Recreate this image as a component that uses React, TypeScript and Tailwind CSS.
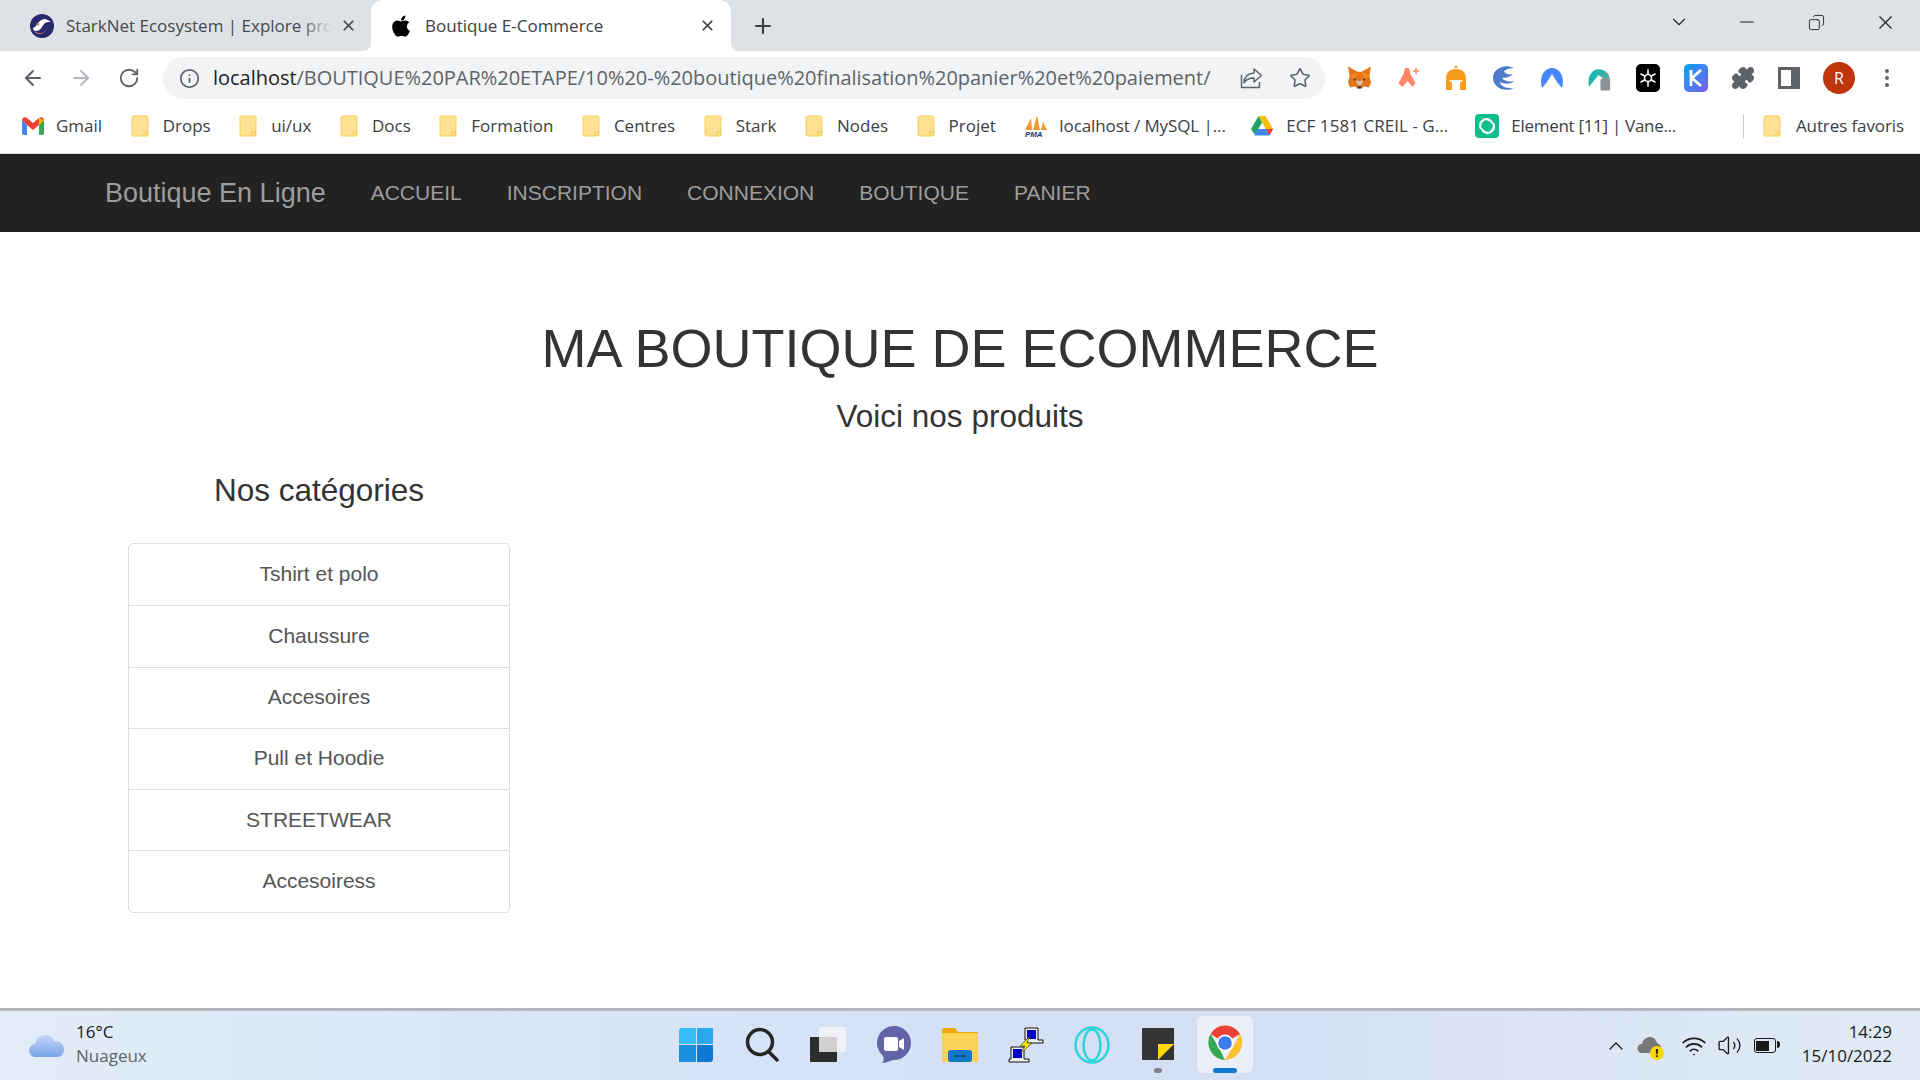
import { ArrowLeft, ArrowRight, RotateCw, Info, Star, Plus, X, ChevronDown, Minus, Copy, Puzzle, EllipsisVertical, ChevronUp, Wifi, Volume2 } from 'lucide-react'
import { FaApple } from 'react-icons/fa'

const uiFont = "font-['Open_Sans',sans-serif]"

function Folder() {
  return (
    <svg width="18" height="22" viewBox="0 0 18 22" aria-hidden="true">
      <path d="M1 2.500A1.500 1.500 0 0 1 2.500 1h13A1.500 1.500 0 0 1 17 2.500v17a1.500 1.500 0 0 1-1.500 1.500h-13A1.500 1.500 0 0 1 1 19.500z" fill="#fde293" stroke="#f6cf5c" />
      <path d="M13 21v-4h3.500v4" fill="none" stroke="#f2c94c" />
    </svg>
  )
}

function Gmail() {
  return (
    <svg width="22" height="18" viewBox="0 0 22 18" aria-hidden="true">
      <path d="M0 3v13a2 2 0 0 0 2 2h3V8z" fill="#4285f4" />
      <path d="M22 3v13a2 2 0 0 1-2 2h-3V8z" fill="#34a853" />
      <path d="M0 3c0-2.500 3-3.700 5-2l6 5 6-5c2-1.700 5-.5 5 2L17 8l-6 5-6-5z" fill="#ea4335" />
      <path d="M17 1l5 2-5 5z" fill="#fbbc04" />
    </svg>
  )
}

function Pma() {
  return (
    <svg width="24" height="24" viewBox="0 0 24 24" aria-hidden="true">
      <path d="M1 16 7 4l1 12zM9 16l4-15 3 15zM17 16l2-8 4 8z" fill="#f39a2d" />
      <text x="1" y="23" fontSize="8" fontWeight="700" fontStyle="italic" fill="#24356f" fontFamily="Liberation Sans">PMA</text>
    </svg>
  )
}

function Drive() {
  return (
    <svg width="22" height="20" viewBox="0 0 22 20" aria-hidden="true">
      <path d="M7.500 0h7L22 13h-7z" fill="#fbbc04" />
      <path d="M7.500 0 11 6.500 4 19 0 13z" fill="#1ea362" />
      <path d="M7 13h15l-3.500 6.500H3.500z" fill="#4285f4" />
      <path d="M18.500 19.500 15 13h7z" fill="#ea4335" />
    </svg>
  )
}

function ElementLogo() {
  return (
    <svg width="24" height="24" viewBox="0 0 24 24" aria-hidden="true">
      <rect width="24" height="24" rx="4" fill="#0dbd8b" />
      <path d="M9 5.500a7 7 0 0 1 8 3M18.500 10a7 7 0 0 1-3 8M15 18.500a7 7 0 0 1-8-3M5.500 14a7 7 0 0 1 3-8" fill="none" stroke="#fff" strokeWidth="2.200" strokeLinecap="round" />
    </svg>
  )
}

function Fox() {
  return (
    <svg width="26" height="26" viewBox="0 0 24 24" aria-hidden="true">
      <path d="M1 1l9 5h4l9-5-1.500 9 1.500 6-2 5-5-1-1.500 2h-5L8 20l-5 1-2-5 1.500-6z" fill="#e2761b" />
      <path d="M2.500 10 10 6 8 14zM21.500 10 14 6l2 8z" fill="#f6851b" />
      <path d="M8 14l2.500 5h3L16 14l-4 1z" fill="#d7c1b3" />
      <path d="M10 20h4l-1 2h-2z" fill="#233447" />
      <path d="M6 13l2.500-.5L8 15zM18 13l-2.500-.5.500 2.500z" fill="#233447" />
    </svg>
  )
}

const bookmarks = [
  { label: 'Gmail', icon: <Gmail />, cls: 'gap-3 mr-[28.5px]' },
  { label: 'Drops' },
  { label: 'ui/ux' },
  { label: 'Docs' },
  { label: 'Formation' },
  { label: 'Centres' },
  { label: 'Stark' },
  { label: 'Nodes' },
  { label: 'Projet' },
  { label: 'localhost / MySQL |...', icon: <Pma />, cls: 'gap-[11px] mr-[25.5px] tracking-[-0.1px]' },
  { label: 'ECF 1581 CREIL - G...', icon: <Drive />, cls: 'gap-[13px] mr-[27px] tracking-[0.05px]' },
  { label: 'Element [11] | Vane...', icon: <ElementLogo />, cls: 'gap-[12px] tracking-[-0.3px]' },
]

const extensions = [
  <Fox key="fox" />,
  <svg key="a" width="24" height="24" viewBox="0 0 24 24"><path d="M9 2h4l1.500 6 5 9-3 4-5-6-5 6-4-4 5-9z" fill="#ff8a65" /><path d="M20 2v6M17 5h6" stroke="#ff8a65" strokeWidth="1.500" /></svg>,
  <svg key="h" width="22" height="26" viewBox="0 0 22 26"><path d="M11 0l2 3H9zM1 14C1 7 5 4 11 4s10 3 10 10v11h-6v-7l3-3H4l3 3v7H1z" fill="#f89c1c" /></svg>,
  <svg key="c" width="24" height="26" viewBox="0 0 24 26"><path d="M22 3C12-2 1 4 1 13s11 15 21 10c-7 1-14-2-14-6 4 2 10 3 14-1-5 1-10 0-12-3 3 0 8-1 11-4-4 1-8 0-9-3 3-2 6-3 9-3z" fill="#4a7cc9" /></svg>,
  <svg key="n" width="24" height="22" viewBox="0 0 24 22"><path d="M2 21C-1 12 3 1 12 1s13 11 10 20l-5-6-5-8-5 8z" fill="#4687ff" /></svg>,
  <svg key="v" width="26" height="26" viewBox="0 0 26 26"><path d="M2 22C0 12 5 4 12 4s10 4 12 10l-8-1-4-3-5 6z" fill="#1eb7ad" /><rect x="14" y="14" width="10" height="12" rx="1" fill="#8a9297" /><circle cx="19" cy="11" r="3" fill="none" stroke="#8a9297" strokeWidth="1.500" /></svg>,
  <svg key="s" width="24" height="28" viewBox="0 0 24 28"><rect width="24" height="28" rx="5" fill="#000" /><g stroke="#fff" strokeWidth="1.600" strokeLinecap="round"><path d="M12 6v16M5 10l14 8M19 10 5 18" /></g><circle cx="12" cy="14" r="3.500" fill="#000" stroke="#fff" strokeWidth="1.500" /></svg>,
  <svg key="k" width="24" height="28" viewBox="0 0 24 28"><defs><linearGradient id="kg" x1="0" y1="0" x2="1" y2="1"><stop offset="0" stopColor="#08a5ef" /><stop offset="1" stopColor="#7c5cf0" /></linearGradient></defs><rect width="24" height="28" rx="5" fill="url(#kg)" /><path d="M7 6v16M17 6l-9 8 9 8" fill="none" stroke="#fff" strokeWidth="2.800" /></svg>,
]

const categories = ['Tshirt et polo', 'Chaussure', 'Accesoires', 'Pull et Hoodie', 'STREETWEAR', 'Accesoiress']
const navLinks = ['ACCUEIL', 'INSCRIPTION', 'CONNEXION', 'BOUTIQUE', 'PANIER']

function BrowserChrome() {
  return (
    <div className={uiFont}>
      {/* Tab strip */}
      <div className="h-[51px] bg-[#dee1e6] flex items-end">
        <div className="w-[371px] h-[51px] flex items-center pl-[30px] pr-[14px]">
          <svg width="24" height="24" viewBox="0 0 24 24" className="shrink-0" aria-hidden="true">
            <circle cx="12" cy="12" r="12" fill="#29296e" />
            <path d="M3 14c4-1 5-8 11-9 3 0 5 2 7 3-3 0-5 0-7 2s-3 7-8 7c-2 0-3-1-3-3z" fill="#fff" />
            <path d="M4 17c4 3 10 3 13-2-2 5-10 7-13 2z" fill="#ec796b" />
            <circle cx="8" cy="10" r="1.500" fill="#ec796b" />
          </svg>
          <div className="relative ml-3 w-[266px] overflow-hidden whitespace-nowrap text-[17px] text-[#45494e]">
            StarkNet Ecosystem | Explore pro
            <span className="absolute inset-y-0 right-0 w-8 bg-gradient-to-r from-transparent to-[#dee1e6]" />
          </div>
          <X size={17} strokeWidth={2.4} className="ml-auto text-[#45494e]" />
        </div>
        <div className="relative w-[360px] h-[51px] bg-white rounded-t-[12px] flex items-center pl-[18px] pr-[15px]">
          <span className="absolute bottom-0 -left-2 w-2 h-2 bg-[radial-gradient(circle_at_0_0,transparent_8px,#fff_8.5px)]" />
          <span className="absolute bottom-0 -right-2 w-2 h-2 bg-[radial-gradient(circle_at_100%_0,transparent_8px,#fff_8.5px)]" />
          <FaApple size={24} className="text-black shrink-0" />
          <span className="ml-3 text-[17px] text-[#3c4043] whitespace-nowrap">Boutique E-Commerce</span>
          <X size={17} strokeWidth={2.4} className="ml-auto text-[#3c4043]" />
        </div>
        <div className="h-[51px] flex items-center ml-[20px]">
          <Plus size={24} strokeWidth={2.2} className="text-[#3c4043]" />
        </div>
        <div className="ml-auto h-[44px] self-start flex items-center text-[#222]">
          <ChevronDown size={22} strokeWidth={1.2} className="mr-[46px]" />
          <Minus size={22} strokeWidth={1.2} className="mr-[50px]" />
          <Copy size={17} strokeWidth={1.3} className="mr-[49px] -scale-x-100" />
          <X size={23} strokeWidth={1.2} className="mr-[23px]" />
        </div>
      </div>

      {/* Toolbar */}
      <div className="h-[54px] bg-white flex items-center pl-[21px] pr-[21px]">
        <ArrowLeft size={24} className="text-[#5f6368] shrink-0" />
        <ArrowRight size={24} className="text-[#b4b7bb] shrink-0 ml-6" />
        <RotateCw size={22} className="text-[#5f6368] shrink-0 ml-[25px]" />
        <div className="ml-[23px] w-[1162px] h-[42px] rounded-full bg-[#f1f3f4] flex items-center pl-4 pr-[14px] shrink-0">
          <Info size={21} className="text-[#5f6368] shrink-0" />
          <span className="ml-[13px] text-[20px] tracking-[-0.03px] whitespace-nowrap text-[#5f6368]"><span className="text-[#202124]">localhost</span>/BOUTIQUE%20PAR%20ETAPE/10%20-%20boutique%20finalisation%20panier%20et%20paiement/</span>
          <svg width="24" height="24" viewBox="0 0 24 24" fill="none" stroke="#5f6368" strokeWidth="1.500" strokeLinejoin="round" className="ml-auto shrink-0" aria-hidden="true">
            <path d="M2.500 9v12.500h18V16" />
            <path d="M15 3l7.500 6.500L15 16v-4c-5 0-8 1.500-10 5 0-6 4-9.500 10-10z" />
          </svg>
          <Star size={22} strokeWidth={1.7} className="ml-[26px] text-[#5f6368] shrink-0" />
        </div>
        <div className="ml-[22px] flex items-center gap-[23px]">
          {extensions.map((icon, i) => (
            <div key={i} className="w-[25px] flex justify-center">{icon}</div>
          ))}
          <Puzzle size={24} fill="#5f6368" className="text-[#5f6368]" />
          <div className="w-[22px] h-[22px] border-[3px] border-[#5f6368] bg-[linear-gradient(90deg,#fff_60%,#5f6368_60%)]" />
          <div className="w-8 h-8 rounded-full bg-[#bf360c] text-white text-[16px] flex items-center justify-center">R</div>
          <EllipsisVertical size={24} className="text-[#5f6368] ml-[-3px]" />
        </div>
      </div>

      {/* Bookmarks */}
      <div className="h-[49px] pb-[7px] bg-white border-b border-[#dadce0] flex items-center pl-[22px] text-[17px] text-[#3c4043]">
        {bookmarks.map((b) => (
          <div key={b.label} className={`flex items-center whitespace-nowrap ${b.cls ?? 'gap-[14px] mr-[28.5px]'}`}>
            {b.icon ?? <Folder />}
            <span>{b.label}</span>
          </div>
        ))}
        <div className="ml-auto w-px h-6 bg-[#c8cacc]" />
        <div className="flex items-center gap-[15px] ml-[19px] mr-[16px] whitespace-nowrap tracking-[-0.1px]">
          <Folder />
          <span>Autres favoris</span>
        </div>
      </div>
    </div>
  )
}

function Taskbar() {
  return (
    <div className={`${uiFont} h-[72px] border-t-[3px] border-[#b4b6bb] bg-[linear-gradient(90deg,#e2edf8_0%,#d6e2f6_40%,#d5dff4_65%,#e0ebf6_100%)] flex items-center relative`}>
      <div className="w-[560px] flex items-center pl-[29px]">
        <svg width="36" height="24" viewBox="0 0 36 24" aria-hidden="true">
          <defs><linearGradient id="cl" x1="0" y1="0" x2="0" y2="1"><stop offset="0" stopColor="#c4d8f8" /><stop offset="1" stopColor="#7ba3e8" /></linearGradient></defs>
          <path d="M7 23a6.500 6.500 0 0 1-1-13C7 4 12 1 17 1c4 0 7 2 8.500 6 5 0 9.500 3 9.500 8s-3 8-7 8z" fill="url(#cl)" />
        </svg>
        <div className="ml-[11px] pb-[4px] text-[17px] leading-[24px]">
          <div className="text-[#1a1a1a]">16°C</div>
          <div className="text-[#5f6469]">Nuageux</div>
        </div>
      </div>

      {/* Pinned apps */}
      <div className="absolute left-[673px] top-[5px] flex items-center">
        <div className="w-[46px] h-[56px] flex items-center justify-center">
          <div className="grid grid-cols-2 gap-[1px] w-[34px] h-[34px]">
            <div className="bg-[#38bdf8] rounded-tl-[3px]" /><div className="bg-[#29a8ee]" /><div className="bg-[#1a8fe0]" /><div className="bg-[#0f78d0] rounded-br-[3px]" />
          </div>
        </div>
        <div className="w-[66px] ml-[10px] flex justify-center">
          <svg width="34" height="36" viewBox="0 0 34 36" fill="none" stroke="#262626" strokeWidth="3.500"><circle cx="15" cy="15" r="12.500" /><path d="m24 25 8 8" strokeLinecap="round" /></svg>
        </div>
        <div className="w-[66px] flex justify-center">
          <svg width="36" height="36" viewBox="0 0 36 36"><rect x="0" y="10" width="27" height="25" rx="1" fill="#2d2d2d" /><rect x="9" y="0" width="27" height="25" rx="1" fill="#f4f4f4" fillOpacity=".82" /></svg>
        </div>
        <div className="w-[66px] flex justify-center">
          <svg width="34" height="38" viewBox="0 0 34 38"><path d="M17 0a17 17 0 0 1 0 34c-4 0-6 3-12 3 2-2 2-5 1-7A17 17 0 0 1 17 0z" fill="#6264a7" /><rect x="7" y="11" width="14" height="14" rx="2" fill="#fff" /><path d="m22 15 5-3v12l-5-3z" fill="#fff" /></svg>
        </div>
        <div className="w-[66px] flex justify-center">
          <svg width="36" height="34" viewBox="0 0 36 34"><path d="M0 2a2 2 0 0 1 2-2h11l3 4h20v30H0z" fill="#eda908" /><path d="M0 5h36v29H0z" fill="#fcd35a" /><rect x="6" y="22" width="24" height="12" rx="3" fill="#0f78c8" /><path d="M12 28h12" stroke="#07508a" strokeWidth="2" /></svg>
        </div>
        <div className="w-[66px] flex justify-center">
          <svg width="36" height="36" viewBox="0 0 36 36">
            <path d="M17 1h13v12h5v3H19v-3h-2z" fill="#eee" stroke="#111" />
            <rect x="19" y="3" width="9" height="9" fill="#0000c8" />
            <path d="M3 20h13v12h5v3H1v-3h2z" fill="#eee" stroke="#111" />
            <rect x="5" y="22" width="9" height="9" fill="#0000c8" />
            <path d="M22 9 12 19h5l-5 8 12-11h-5z" fill="#f5e600" stroke="#222" strokeWidth=".6" />
          </svg>
        </div>
        <div className="w-[66px] flex justify-center">
          <svg width="36" height="38" viewBox="0 0 36 38" fill="none" stroke="#2ed4d8" strokeWidth="2.500"><ellipse cx="18" cy="19" rx="16.500" ry="17.500" /><ellipse cx="18" cy="19" rx="8.500" ry="15.500" /></svg>
        </div>
        <div className="relative w-[66px] h-[56px] flex items-center justify-center">
          <svg width="32" height="32" viewBox="0 0 32 32" className="mb-[2px]"><rect width="32" height="32" rx="1" fill="#333" /><path d="M16 16h16L16 32z" fill="#ffd60a" /></svg>
          <span className="absolute bottom-0 left-[29px] w-2 h-[5px] rounded-full bg-[#80838a]" />
        </div>
        <div className="relative w-[56px] h-[57px] ml-[6px] rounded-md bg-[#e9eef9] flex items-center justify-center">
          <svg width="36" height="36" viewBox="0 0 36 36" className="mb-[3px]">
            <path d="M18 18 3.500 9A17 17 0 0 1 33 9z" fill="#ea4335" />
            <path d="M18 35A17.500 17.500 0 0 1 3.500 9L12 23z" fill="#34a853" />
            <path d="M33 9a17.500 17.500 0 0 1-15 26l8-13z" fill="#fbc02d" />
            <circle cx="18" cy="18" r="8.500" fill="#fff" />
            <circle cx="18" cy="18" r="6.800" fill="#3b7ded" />
          </svg>
          <span className="absolute bottom-0 left-[16px] w-6 h-[5px] rounded-full bg-[#0f78d0]" />
        </div>
      </div>

      {/* System tray */}
      <div className="ml-auto flex items-center mr-[28px] text-[#1a1a1a]">
        <ChevronUp size={24} strokeWidth={1.3} />
        <div className="relative ml-[9px] w-6 h-6">
          <svg width="24" height="18" viewBox="0 0 24 18" className="mt-[2px]"><path d="M5 17a4.500 4.500 0 0 1 0-9C6 3 10 1 13 1c3 0 6 2 7 6 3 1 4 3 4 5s-1 5-4 5z" fill="#777" /></svg>
          <span className="absolute right-[-3px] bottom-[-2px] w-[14px] h-[14px] rounded-full bg-[#f7d800] text-[11px] leading-[14px] text-center font-bold text-black">!</span>
        </div>
        <Wifi size={26} strokeWidth={1.5} className="ml-[20px]" />
        <Volume2 size={25} strokeWidth={1.3} className="ml-[10px]" />
        <div className="ml-[12px] w-[22px] h-[15px] border-[1.500px] border-[#1a1a1a] rounded-[3px] p-[1.500px] relative">
          <div className="w-[13px] h-full bg-[#1a1a1a]" />
          <span className="absolute -right-[5px] top-[2px] w-[3px] h-[7px] bg-[#1a1a1a] rounded-r-sm" />
        </div>
        <div className="ml-[26px] pb-[4px] text-right text-[17px] leading-[24px]">
          <div>14:29</div>
          <div>15/10/2022</div>
        </div>
      </div>
    </div>
  )
}

export default function App() {
  return (
    <div className="w-[1920px] h-[1080px] overflow-hidden flex flex-col bg-white">
      <BrowserChrome />

      {/* Navbar */}
      <nav className="h-[78px] bg-[#222] flex items-center pl-[105px] font-['Liberation_Sans',sans-serif] text-[#9d9d9d]">
        <span className="text-[27px] mr-[45px]">Boutique En Ligne</span>
        <div className="flex items-center gap-[45px] text-[21px]">
          {navLinks.map((l) => <span key={l}>{l}</span>)}
        </div>
      </nav>

      <main className="flex-1 font-['Liberation_Sans',sans-serif] text-[#333]">
        <h1 className="mt-[86px] text-center text-[54px] leading-[60px]">MA BOUTIQUE DE ECOMMERCE</h1>
        <h2 className="mt-[18px] text-center text-[31.5px] leading-[40px]">Voici nos produits</h2>
        <div className="ml-[128px] w-[382px] mt-[34px]">
          <h3 className="text-center text-[31.5px] leading-[40px]">Nos catégories</h3>
          <ul className="mt-[33px] border border-[#ddd] rounded-[5px] text-[21px] text-[#555]">
            {categories.map((c, i) => (
              <li key={c} className={`h-[61.300px] pb-[2px] flex items-center justify-center ${i > 0 ? 'border-t border-[#ddd]' : ''}`}>{c}</li>
            ))}
          </ul>
        </div>
      </main>

      <Taskbar />
    </div>
  )
}
